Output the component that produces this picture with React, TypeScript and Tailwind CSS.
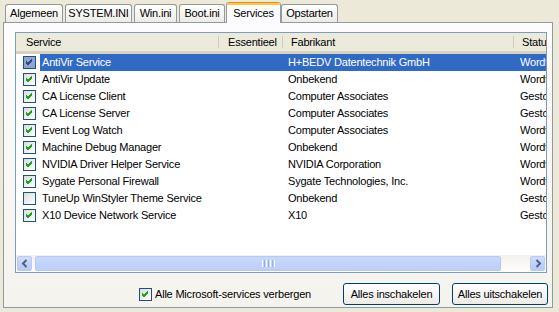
import React from 'react';

type Row = { on: boolean; name: string; maker: string; status: string };

const rows: Row[] = [
  { on: true, name: 'AntiVir Service', maker: 'H+BEDV Datentechnik GmbH', status: 'Wordt uitgevoerd' },
  { on: true, name: 'AntiVir Update', maker: 'Onbekend', status: 'Wordt uitgevoerd' },
  { on: true, name: 'CA License Client', maker: 'Computer Associates', status: 'Gestopt' },
  { on: true, name: 'CA License Server', maker: 'Computer Associates', status: 'Gestopt' },
  { on: true, name: 'Event Log Watch', maker: 'Computer Associates', status: 'Wordt uitgevoerd' },
  { on: true, name: 'Machine Debug Manager', maker: 'Onbekend', status: 'Wordt uitgevoerd' },
  { on: true, name: 'NVIDIA Driver Helper Service', maker: 'NVIDIA Corporation', status: 'Wordt uitgevoerd' },
  { on: true, name: 'Sygate Personal Firewall', maker: 'Sygate Technologies, Inc.', status: 'Wordt uitgevoerd' },
  { on: false, name: 'TuneUp WinStyler Theme Service', maker: 'Onbekend', status: 'Gestopt' },
  { on: true, name: 'X10 Device Network Service', maker: 'X10', status: 'Gestopt' },
];

const tabs = [
  { label: 'Algemeen', w: 'w-[58px] ml-[5px]' },
  { label: 'SYSTEM.INI', w: 'w-[67px] ml-[2px]' },
  { label: 'Win.ini', w: 'w-[43px] ml-[2px]' },
  { label: 'Boot.ini', w: 'w-[46px] ml-[2px]' },
];

function CheckBox({ on, dim }: { on: boolean; dim?: boolean }) {
  return (
    <div
      className={
        'w-[13px] h-[13px] flex-none border border-[#1C5180] ' +
        (dim
          ? 'bg-[#8FA5CF]'
          : 'bg-gradient-to-br from-[#DCDCD7] to-[#FFFFFF]')
      }
    >
      {on && (
        <svg width="11" height="11" viewBox="0 0 11 11" className="block">
          <path
            d="M2 5 L4 7 L8 3 M2 6 L4 8 L8 4 M2 4 L4 6 L8 2"
            fill="none"
            stroke={dim ? '#2C4A80' : '#21A121'}
            strokeWidth="1"
            shapeRendering="crispEdges"
          />
        </svg>
      )}
    </div>
  );
}

function Arrow({ dir }: { dir: 'l' | 'r' }) {
  return (
    <div className="w-[15px] h-[15px] m-[1px] flex-none rounded-[2px] border border-[#B8CBF5] bg-gradient-to-b from-[#CFDCFC] to-[#B5C9F7] flex items-center justify-center">
      <svg width="8" height="9" viewBox="0 0 8 9">
        <path
          d={dir === 'l' ? 'M5.5 1 L2 4.5 L5.5 8' : 'M2.5 1 L6 4.5 L2.5 8'}
          fill="none"
          stroke="#4D6185"
          strokeWidth="2"
        />
      </svg>
    </div>
  );
}

export default function App() {
  return (
    <div
      className="w-[559px] h-[312px] bg-[#ECE9D8] text-[11px] tracking-[-0.2px] text-black overflow-hidden"
      style={{ fontFamily: '"Liberation Sans", Arial, sans-serif' }}
    >
      {/* tabs */}
      <div className="flex items-end h-[22px] pt-[1px]">
        {tabs.map((t) => (
          <div
            key={t.label}
            className={
              t.w +
              ' h-[18px] flex-none flex items-center justify-center rounded-t-[3px] border border-b-0 border-[#919B9C] bg-gradient-to-b from-[#FFFFFF] to-[#ECEBE6]'
            }
          >
            {t.label}
          </div>
        ))}
        <div className="w-[55px] h-[21px] ml-[1px] -mb-[1px] relative z-10 flex-none flex flex-col rounded-t-[3px] border-x border-[#919B9C] bg-[#FCFCFE] overflow-hidden">
          <div className="h-[1px] bg-[#E68B2C]" />
          <div className="h-[2px] bg-[#FFC73C]" />
          <div className="flex-1 flex items-center justify-center pb-[2px]">Services</div>
        </div>
        <div className="w-[57px] h-[18px] flex-none flex items-center justify-center rounded-t-[3px] border border-b-0 border-[#919B9C] bg-gradient-to-b from-[#FFFFFF] to-[#ECEBE6]">
          Opstarten
        </div>
      </div>

      {/* panel */}
      <div className="ml-[3px] w-[550px] h-[286px] border border-[#919B9C] bg-gradient-to-b from-[#FCFCFE] to-[#F4F3EE] flex flex-col">
        <div className="ml-[11px] mt-[9px] w-[532px] h-[241px] border border-[#7F9DB9] bg-white flex flex-col overflow-hidden">
          {/* header */}
          <div className="h-[21px] flex-none flex bg-[#EBEADB] border-b-[3px] border-[#D6D2C2] whitespace-nowrap">
            <div className="w-[202px] flex-none flex items-center pl-[10px]">Service</div>
            <div className="w-[64px] flex-none flex items-center pl-[9px] border-l border-[#D0CDBB] my-[3px]">Essentieel</div>
            <div className="w-[231px] flex-none flex items-center pl-[8px] border-l border-[#D0CDBB] my-[3px]">Fabrikant</div>
            <div className="w-[200px] flex-none flex items-center pl-[8px] border-l border-[#D0CDBB] my-[3px]">Status</div>
          </div>

          {/* rows */}
          <div className="flex-1 whitespace-nowrap">
            {rows.map((r, i) => {
              const sel = i === 0;
              return (
                <div key={r.name} className="h-[17px] flex items-center">
                  <div className="w-[24px] flex-none pl-[7px]">
                    <CheckBox on={r.on} dim={sel} />
                  </div>
                  <div
                    className={
                      'h-full flex-1 flex items-center overflow-hidden ' +
                      (sel ? 'bg-[#316AC5] text-white' : '')
                    }
                  >
                    <div className="w-[178px] flex-none pl-[2px]">{r.name}</div>
                    <div className="w-[64px] flex-none" />
                    <div className="w-[231px] flex-none pl-[6px]">{r.maker}</div>
                    <div className="w-[200px] flex-none pl-[7px]">{r.status}</div>
                  </div>
                </div>
              );
            })}
          </div>

          {/* horizontal scrollbar */}
          <div className="h-[17px] flex-none flex bg-gradient-to-b from-[#F3F1EC] to-[#FEFEFB]">
            <Arrow dir="l" />
            <div className="flex-1 flex py-[1px] pl-[2px] pr-[27px]">
              <div className="w-[466px] h-[15px] rounded-[2px] border border-[#B6C9F4] bg-gradient-to-b from-[#C9D8FC] to-[#BCCFF9] flex items-center justify-center">
                <div className="flex gap-[1px]">
                  <div className="w-[1px] h-[7px] bg-white" />
                  <div className="w-[1px] h-[7px] bg-[#8CB0F8]" />
                  <div className="w-[1px] h-[7px] bg-white" />
                  <div className="w-[1px] h-[7px] bg-[#8CB0F8]" />
                  <div className="w-[1px] h-[7px] bg-white" />
                  <div className="w-[1px] h-[7px] bg-[#8CB0F8]" />
                  <div className="w-[1px] h-[7px] bg-white" />
                </div>
              </div>
            </div>
            <Arrow dir="r" />
          </div>
        </div>

        {/* bottom bar */}
        <div className="flex items-center mt-[10px] pr-[4px]">
          <div className="ml-[135px]">
            <CheckBox on />
          </div>
          <span className="ml-[3px]">Alle Microsoft-services verbergen</span>
          <button className="ml-auto w-[97px] h-[22px] rounded-[3px] border border-[#003C74] bg-gradient-to-b from-[#FFFFFF] to-[#ECEBE6]">
            Alles inschakelen
          </button>
          <button className="ml-[12px] w-[96px] h-[22px] rounded-[3px] border border-[#003C74] bg-gradient-to-b from-[#FFFFFF] to-[#ECEBE6]">
            Alles uitschakelen
          </button>
        </div>
      </div>
    </div>
  );
}
